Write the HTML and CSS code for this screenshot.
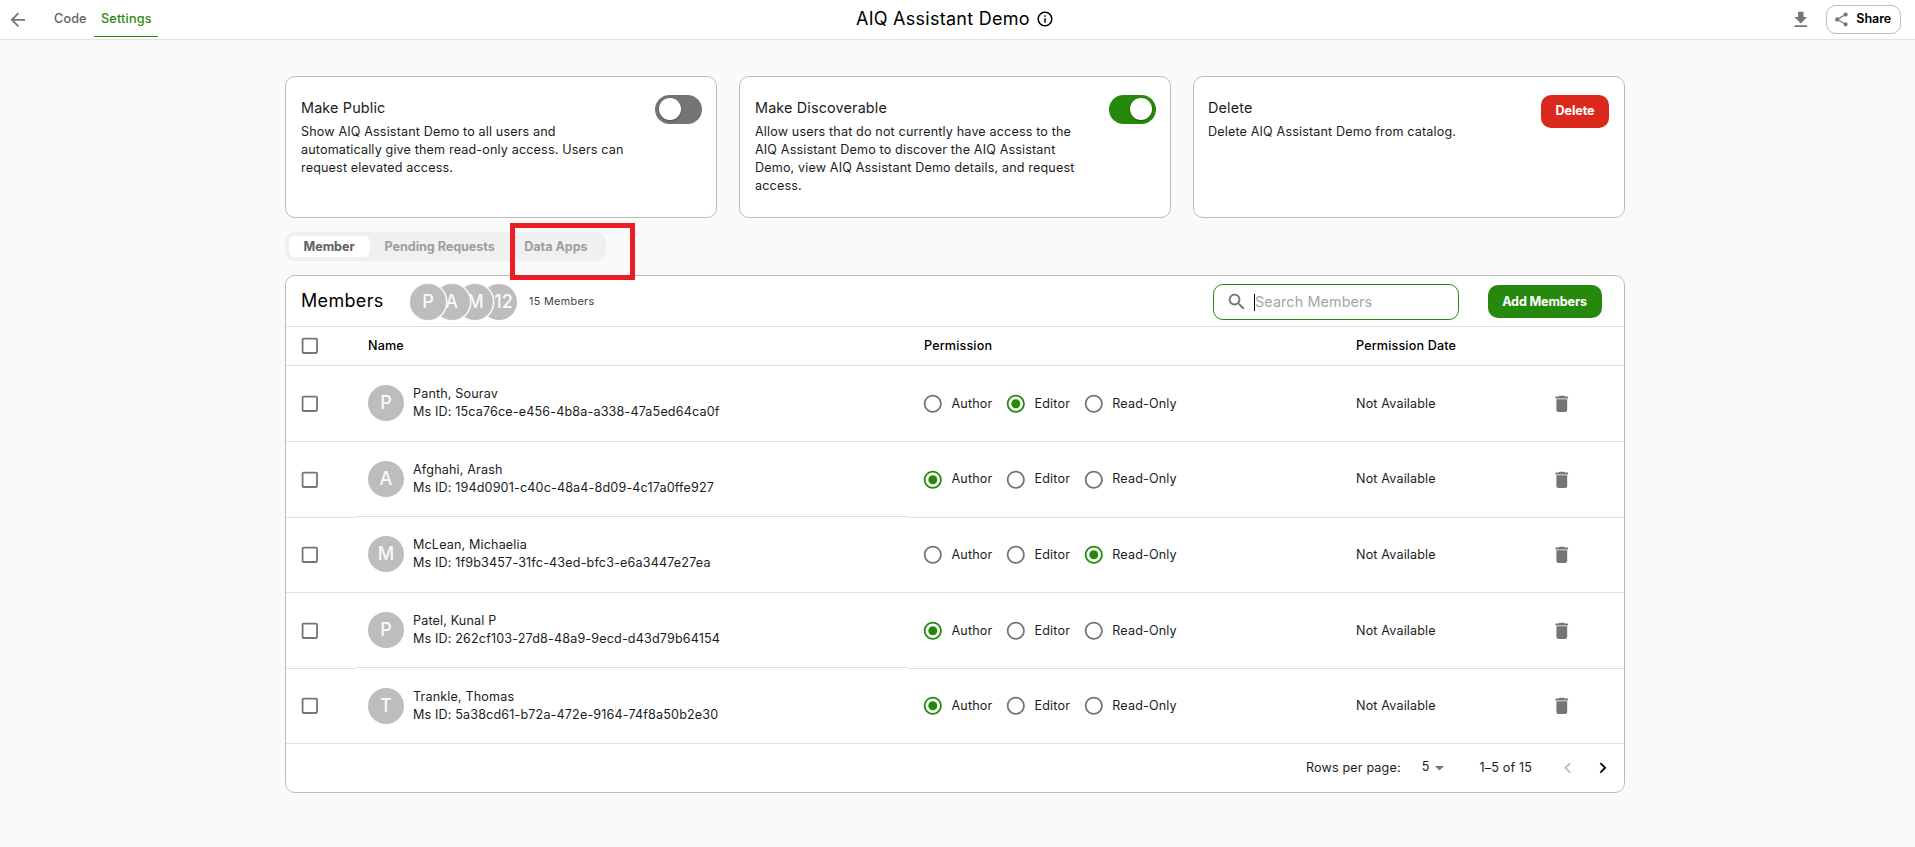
FILE: index.html
```
<!DOCTYPE html>
<html lang="en">
<head>
<meta charset="utf-8">
<title>AIQ Assistant Demo</title>
<link rel="stylesheet" href="styles.css">
</head>
<body>
<svg class="sprite" aria-hidden="true">
  <symbol id="box" viewBox="0 0 24 24"><path d="M19 5v14H5V5h14m0-2H5c-1.1 0-2 .9-2 2v14c0 1.1.9 2 2 2h14c1.1 0 2-.9 2-2V5c0-1.1-.9-2-2-2z"/></symbol>
  <symbol id="radio" viewBox="0 0 24 24"><path d="M12 2C6.48 2 2 6.48 2 12s4.48 10 10 10 10-4.48 10-10S17.52 2 12 2zm0 18c-4.42 0-8-3.58-8-8s3.58-8 8-8 8 3.58 8 8-3.58 8-8 8z"/></symbol>
  <symbol id="radio-on" viewBox="0 0 24 24"><path d="M12 2C6.48 2 2 6.48 2 12s4.48 10 10 10 10-4.48 10-10S17.52 2 12 2zm0 18c-4.42 0-8-3.58-8-8s3.58-8 8-8 8 3.58 8 8-3.58 8-8 8z"/><circle cx="12" cy="12" r="5"/></symbol>
  <symbol id="trash" viewBox="0 0 24 24"><path d="M6 19c0 1.1.9 2 2 2h8c1.1 0 2-.9 2-2V7H6v12zM19 4h-3.5l-1-1h-5l-1 1H5v2h14V4z"/></symbol>
</svg>

<header class="topbar">
  <svg class="back" viewBox="0 0 24 24"><path d="M20 11H7.83l5.59-5.59L12 4l-8 8 8 8 1.41-1.41L7.83 13H20v-2z"/></svg>
  <nav class="nav"><a class="nav-item">Code</a><a class="nav-item active">Settings</a></nav>
  <div class="title"><h1>AIQ Assistant Demo</h1>
    <svg class="info" viewBox="0 0 24 24"><path d="M11 7h2v2h-2zm0 4h2v6h-2zm1-9C6.48 2 2 6.48 2 12s4.48 10 10 10 10-4.48 10-10S17.52 2 12 2zm0 18c-4.41 0-8-3.59-8-8s3.59-8 8-8 8 3.59 8 8-3.59 8-8 8z"/></svg>
  </div>
  <div class="tools">
    <svg class="icon" viewBox="0 0 24 24"><path d="M19 9h-4V3H9v6H5l7 7 7-7zM5 18v2h14v-2H5z"/></svg>
    <button class="share"><svg viewBox="0 0 24 24"><path d="M18 16.08c-.76 0-1.44.3-1.96.77L8.91 12.7c.05-.23.09-.46.09-.7s-.04-.47-.09-.7l7.05-4.11c.54.5 1.25.81 2.04.81 1.66 0 3-1.34 3-3s-1.34-3-3-3-3 1.34-3 3c0 .24.04.47.09.7L8.04 9.81C7.5 9.31 6.79 9 6 9c-1.66 0-3 1.34-3 3s1.34 3 3 3c.79 0 1.5-.31 2.04-.81l7.12 4.16c-.05.21-.08.43-.08.65 0 1.61 1.31 2.92 2.92 2.92s2.92-1.31 2.92-2.92-1.31-2.92-2.92-2.92z"/></svg>Share</button>
  </div>
</header>

<main class="content">
  <section class="cards">
    <article class="card">
      <div class="card-text"><h2>Make Public</h2><p>Show AIQ Assistant Demo to all users and automatically give them read-only access. Users can request elevated access.</p></div>
      <span class="toggle"><span class="knob"></span></span>
    </article>
    <article class="card">
      <div class="card-text"><h2>Make Discoverable</h2><p>Allow users that do not currently have access to the AIQ Assistant Demo to discover the AIQ Assistant Demo, view AIQ Assistant Demo details, and request access.</p></div>
      <span class="toggle on"><span class="knob"></span></span>
    </article>
    <article class="card delete-card">
      <div class="card-text"><h2>Delete</h2><p>Delete AIQ Assistant Demo from catalog.</p></div>
      <button class="btn danger">Delete</button>
    </article>
  </section>

  <div class="tabs">
    <span class="tab selected">Member</span><span class="tab">Pending Requests</span><span class="tab last">Data Apps</span>
    <span class="callout"></span>
  </div>

  <section class="panel">
    <div class="panel-head">
      <h2>Members</h2>
      <div class="stack"><span class="avatar">P</span><span class="avatar">A</span><span class="avatar">M</span><span class="avatar more">12</span></div>
      <span class="count">15 Members</span>
      <div class="search">
        <svg class="icon" viewBox="0 0 24 24"><path d="M15.5 14h-.79l-.28-.27C15.41 12.59 16 11.11 16 9.5 16 5.91 13.09 3 9.5 3S3 5.91 3 9.5 5.91 16 9.5 16c1.61 0 3.09-.59 4.23-1.57l.27.28v.79l5 4.99L20.49 19l-4.99-5zm-6 0C7.01 14 5 11.99 5 9.5S7.01 5 9.5 5 14 7.01 14 9.5 11.99 14 9.5 14z"/></svg>
        <span class="caret"></span><span class="placeholder">Search Members</span>
      </div>
      <button class="btn primary">Add Members</button>
    </div>

    <div class="row head"><div class="check"><svg class="icon"><use href="#box"/></svg></div><div class="name-head">Name</div><div>Permission</div><div>Permission Date</div><div></div></div>

    <div class="row">
      <div class="cell check"><svg class="icon"><use href="#box"/></svg></div>
      <div class="cell who"><span class="avatar">P</span><div>Panth, Sourav<br>Ms ID: 15ca76ce-e456-4b8a-a338-47a5ed64ca0f</div></div>
      <div class="cell perms"><label><svg class="icon"><use href="#radio"/></svg>Author</label><label><svg class="icon green"><use href="#radio-on"/></svg>Editor</label><label><svg class="icon"><use href="#radio"/></svg>Read-Only</label></div>
      <div class="cell date">Not Available</div>
      <div class="cell remove"><svg class="icon"><use href="#trash"/></svg></div>
    </div>
    <div class="row raised">
      <div class="cell check"><svg class="icon"><use href="#box"/></svg></div>
      <div class="cell who"><span class="avatar">A</span><div>Afghahi, Arash<br>Ms ID: 194d0901-c40c-48a4-8d09-4c17a0ffe927</div></div>
      <div class="cell perms"><label><svg class="icon green"><use href="#radio-on"/></svg>Author</label><label><svg class="icon"><use href="#radio"/></svg>Editor</label><label><svg class="icon"><use href="#radio"/></svg>Read-Only</label></div>
      <div class="cell date">Not Available</div>
      <div class="cell remove"><svg class="icon"><use href="#trash"/></svg></div>
    </div>
    <div class="row short mid">
      <div class="cell check"><svg class="icon"><use href="#box"/></svg></div>
      <div class="cell who"><span class="avatar">M</span><div>McLean, Michaelia<br>Ms ID: 1f9b3457-31fc-43ed-bfc3-e6a3447e27ea</div></div>
      <div class="cell perms"><label><svg class="icon"><use href="#radio"/></svg>Author</label><label><svg class="icon"><use href="#radio"/></svg>Editor</label><label><svg class="icon green"><use href="#radio-on"/></svg>Read-Only</label></div>
      <div class="cell date">Not Available</div>
      <div class="cell remove"><svg class="icon"><use href="#trash"/></svg></div>
    </div>
    <div class="row raised fourth">
      <div class="cell check"><svg class="icon"><use href="#box"/></svg></div>
      <div class="cell who"><span class="avatar">P</span><div>Patel, Kunal P<br>Ms ID: 262cf103-27d8-48a9-9ecd-d43d79b64154</div></div>
      <div class="cell perms"><label><svg class="icon green"><use href="#radio-on"/></svg>Author</label><label><svg class="icon"><use href="#radio"/></svg>Editor</label><label><svg class="icon"><use href="#radio"/></svg>Read-Only</label></div>
      <div class="cell date">Not Available</div>
      <div class="cell remove"><svg class="icon"><use href="#trash"/></svg></div>
    </div>
    <div class="row short">
      <div class="cell check"><svg class="icon"><use href="#box"/></svg></div>
      <div class="cell who"><span class="avatar">T</span><div>Trankle, Thomas<br>Ms ID: 5a38cd61-b72a-472e-9164-74f8a50b2e30</div></div>
      <div class="cell perms"><label><svg class="icon green"><use href="#radio-on"/></svg>Author</label><label><svg class="icon"><use href="#radio"/></svg>Editor</label><label><svg class="icon"><use href="#radio"/></svg>Read-Only</label></div>
      <div class="cell date">Not Available</div>
      <div class="cell remove"><svg class="icon"><use href="#trash"/></svg></div>
    </div>

    <div class="pager">
      <span class="per-page">Rows per page:</span>
      <span class="size">5</span>
      <svg class="drop" viewBox="0 0 10 5"><path d="M0 0l5 5 5-5z"/></svg>
      <span class="range">1–5 of 15</span>
      <svg class="icon prev" viewBox="0 0 24 24"><path d="M15.41 16.59 10.83 12l4.58-4.59L14 6l-6 6 6 6z"/></svg>
      <svg class="icon next" viewBox="0 0 24 24"><path d="M8.59 16.59 13.17 12 8.59 7.41 10 6l6 6-6 6z"/></svg>
    </div>
  </section>
</main>
</body>
</html>
```
FILE: styles.css
```
* { box-sizing: border-box; }
body {
  margin: 0;
  min-height: 847px;
  background: #fafafa;
  color: #1c1c1c;
  font: 12.6px/18px Inter, "Liberation Sans", sans-serif;
  letter-spacing: .145px;
}
h1, h2, p { margin: 0; font-weight: 400; }
button { font: inherit; letter-spacing: inherit; margin: 0; padding: 0; }
.sprite { position: absolute; width: 0; height: 0; }
.icon { display: block; flex: none; width: 21.6px; height: 21.6px; fill: #757575; }
.icon.green { fill: #26890d; }

/* Top bar */
.topbar {
  display: grid;
  grid-template-columns: 38px 809px 1fr auto;
  height: 40px;
  background: #fff;
  border-bottom: 1px solid #e0e0e0;
}
.back { width: 21.6px; height: 21.6px; margin: 8.5px 0 0 7.4px; fill: #757575; }
.nav { display: flex; padding-left: 9px; }
.nav-item { height: 37px; padding: 10px 7px 0; width: 47px; font-weight: 500; color: #616161; }
.nav-item.active { color: #26890d; border-bottom: 1px solid #26890d; width: 64px; letter-spacing: .2px; }
.title { display: flex; padding-left: 9px; }
.title h1 { font-size: 18px; line-height: 24px; letter-spacing: .26px; color: #000; padding-top: 6.5px; }
.info { width: 18px; height: 18px; margin: 10.3px 0 0 6.5px; fill: #000; }
.tools { display: flex; padding-right: 14px; }
.tools > .icon { margin: 8.500px 14.500px 0 0; }
.share {
  display: flex;
  align-items: center;
  width: 75px;
  height: 29px;
  margin-top: 5px;
  padding: 0 0 1px 6px;
  border: 1px solid #bdbdbd;
  border-radius: 10px;
  background: #fff;
  color: #000;
  font-weight: 600;
  letter-spacing: -.1px;
}
.share svg { width: 16.8px; height: 16.8px; margin-right: 6.5px; fill: #757575; }

/* Setting cards */
.content { width: 1340px; margin: 36px 0 0 285px; }
.cards { display: grid; grid-template-columns: repeat(3, 432px); gap: 22px; }
.card {
  display: flex;
  justify-content: space-between;
  height: 142px;
  padding: 18px 14px 0 15px;
  background: #fff;
  border: 1px solid #bdbdbd;
  border-radius: 10px;
}
.delete-card { padding-left: 14px; }
.card-text { width: 330px; padding-top: 2px; }
.card-text h2 { font-size: 14.4px; line-height: 22px; height: 26px; }
.toggle { display: flex; width: 47px; height: 29px; padding: 3px 4px; border-radius: 15px; background: #757575; }
.toggle.on { background: #26890d; justify-content: flex-end; }
.knob { width: 22px; height: 22px; border-radius: 50%; background: #fff; box-shadow: 0 1px 2px rgba(0, 0, 0, .35); }
.toggle:not(.on) { padding-left: 3.500px; }
.btn { height: 33px; border: 0; border-radius: 10px; color: #fff; font-weight: 700; letter-spacing: -.1px; padding-bottom: 2px; }
.danger { width: 68px; background: #da291c; margin-right: 1px; }
.primary { width: 114px; background: #26890d; letter-spacing: -.15px; padding: 0 1px 0 0; }

/* Tabs */
.tabs {
  position: relative;
  display: flex;
  width: 321px;
  height: 29px;
  margin: 14px 0;
  padding: 4px;
  background: #f0f0f0;
  border-radius: 10px;
  font-weight: 700;
  letter-spacing: -.05px;
  line-height: 21px;
  color: #9e9e9e;
}
.tab { padding-left: 14.5px; }
.tab.selected { width: 81px; background: #fff; border-radius: 6px; color: #616161; }
.tab.last { padding-left: 29.5px; }
.callout { position: absolute; left: 225px; top: -9px; width: 125px; height: 57px; border: 5px solid #ed1c24; z-index: 1; }

/* Members table */
.panel { height: 518px; background: #fff; border: 1px solid #bdbdbd; border-radius: 10px; }
.panel-head { display: flex; height: 51px; border-bottom: 1px solid #e0e0e0; }
.panel-head h2 { width: 124px; padding-left: 15px; font-size: 18px; line-height: 50px; letter-spacing: .33px; color: #000; }
.avatar { width: 36px; height: 36px; flex: none; border-radius: 50%; background: #bdbdbd; color: #fafafa; font-size: 18px; font-weight: 500; line-height: 35px; text-align: center; letter-spacing: 0; }
.stack { display: flex; margin-top: 8px; width: 119px; isolation: isolate; }
.stack .avatar { box-shadow: 0 0 0 1.5px #fafafa; margin-right: -12.3px; position: relative; }
.stack .avatar:nth-child(1) { z-index: 3; }
.stack .avatar:nth-child(2) { z-index: 2; }
.stack .avatar:nth-child(3) { z-index: 1; }
.stack .more { padding-left: 9px; box-shadow: none; }
.count { width: 684px; font-size: 10.8px; letter-spacing: .33px; line-height: 52px; color: #424242; }
.search { display: flex; align-items: center; width: 246px; height: 36px; margin: 8px 29px 0 0; padding-left: 12px; border: 1px solid #26890d; border-radius: 10px; }
.caret { width: 1px; height: 17px; margin-left: 6.4px; background: #000; }
.placeholder { font-size: 14.4px; letter-spacing: .09px; color: #a6a6a6; line-height: 34px; }
.panel-head .btn { margin-top: 9px; }

.row { --top: 27px; display: grid; grid-template-columns: 69px 554px 432px 210px 73px; height: 76px; }
.row.short { height: 75px; --top: 26px; }
.row.head { height: 39px; border-bottom: 1px solid #e0e0e0; font-weight: 500; line-height: 37px; color: #000; }
.row.head > div { padding-left: 15px; }
.row.head > .name-head { padding-left: 13px; }
.row.head > .check { padding: 8px 0 0 13px; }
.cell { border-bottom: 1px solid #e0e0e0; padding: var(--top) 0 0 15px; }
.cell.check { padding-left: 13px; }
.cell.who { display: flex; gap: 9px; padding: 19px 0 0 13px; }
.mid .cell.who { padding-top: 18px; }
.raised .who { height: 75px; }
.cell.perms { display: flex; padding-left: 12.5px; }
.perms label { display: flex; margin-right: 13px; line-height: 22px; }
.perms .icon { margin-right: 8.4px; }
.perms label + label .icon { margin-right: 7.6px; }
.date { line-height: 22px; }
.raised:not(.fourth) .perms label, .raised:not(.fourth) .date { line-height: 20px; }
.cell.remove { padding-left: 0; }
.pager { display: flex; height: 48px; padding-left: 1020px; line-height: 48px; }
.size { margin-left: 21px; line-height: 46px; }
.drop { width: 9px; height: 4.5px; margin: 22px 0 0 5.5px; fill: #757575; }
.range { margin-left: 35.500px; }
.pager .icon { margin-top: 12.7px; }
.pager .prev { margin-left: 24.5px; fill: #bdbdbd; }
.pager .next { margin-left: 13.8px; fill: #000; }
```
